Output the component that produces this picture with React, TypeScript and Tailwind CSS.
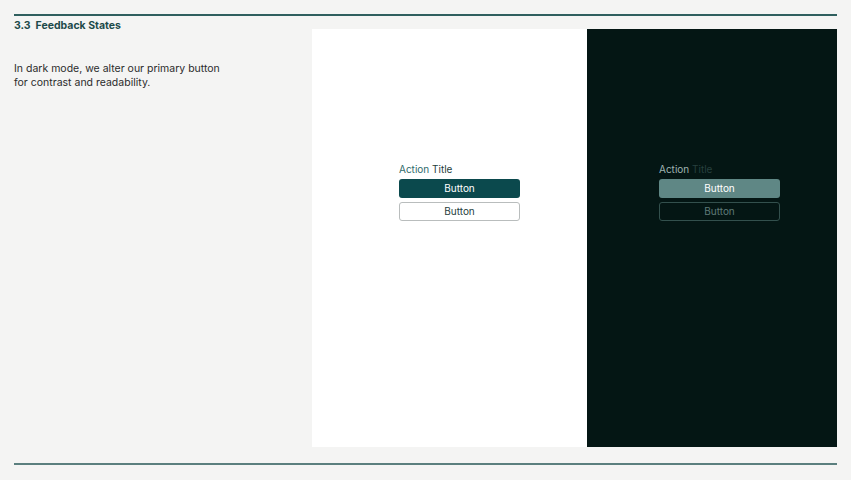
export default function App() {
  return (
    <div className="w-[851px] h-[480px] bg-[#f4f4f3] px-[14px] pt-[14px] font-['Inter','Noto_Sans',sans-serif] overflow-hidden">
      <div className="h-[2px] bg-[#2f5f5e]" />
      <div className="flex">
        <div className="w-[298px] pt-[3px]">
          <h1 className="text-[10.5px] leading-[14px] font-bold text-[#1d4a4a]">
            3.3&nbsp;&nbsp;Feedback States
          </h1>
          <p className="mt-[29px] text-[10.5px] leading-[14px] text-[#2b2b2b]">
            In dark mode, we alter our primary button
            <br />
            for contrast and readability.
          </p>
        </div>
        {/* light preview */}
        <div className="mt-[13px] w-[275px] h-[418px] bg-white">
          <div className="w-[121px] ml-[87px] mt-[134px]">
            <div className="text-[10px] leading-[12px] mb-[4px]">
              <span className="text-[#2f6b6b]">Action</span>{' '}
              <span className="text-[#1f3d3d]">Title</span>
            </div>
            <div className="h-[19px] rounded-[3px] bg-[#0b494d] text-white text-[10px] flex items-center justify-center">
              Button
            </div>
            <div className="mt-[4px] h-[19px] rounded-[3px] border border-[#b9bdbd] text-[#1f3d3d] text-[10px] flex items-center justify-center">
              Button
            </div>
          </div>
        </div>
        {/* dark preview */}
        <div className="mt-[13px] w-[250px] h-[418px] bg-[#041614]">
          <div className="w-[121px] ml-[72px] mt-[134px]">
            <div className="text-[10px] leading-[12px] mb-[4px]">
              <span className="text-[#9fb3b1]">Action</span>{' '}
              <span className="text-[#27403e]">Title</span>
            </div>
            <div className="h-[19px] rounded-[3px] bg-[#5f8785] text-white text-[10px] flex items-center justify-center">
              Button
            </div>
            <div className="mt-[4px] h-[19px] rounded-[3px] border border-[#33504d] text-[#5f7a78] text-[10px] flex items-center justify-center">
              Button
            </div>
          </div>
        </div>
      </div>
      <div className="mt-[16px] h-[2px] bg-[#5b7f7e]" />
    </div>
  );
}
